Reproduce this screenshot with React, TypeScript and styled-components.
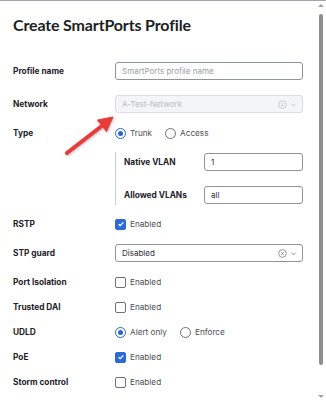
import React from 'react';
import styled, { createGlobalStyle } from 'styled-components';

const GlobalStyle = createGlobalStyle`
  html, body {
    margin: 0;
    padding: 0;
    background: #ffffff;
  }
  * {
    box-sizing: border-box;
  }
`;

const Page = styled.div`
  position: relative;
  width: 326px;
  height: 400px;
  overflow: hidden;
  display: flex;
  flex-direction: row;
  border-top: 1px solid #a3a7ab;
  background: #fff;
  font-family: Inter, 'Noto Sans', sans-serif;
  color: #1d2127;
`;

const Content = styled.div`
  flex: 1;
  padding: 12px 0 0 13px;
  display: flex;
  flex-direction: column;
`;

const Title = styled.h1`
  margin: 0 0 21px;
  font-family: Lato, Inter, sans-serif;
  font-size: 16px;
  line-height: 24px;
  font-weight: 700;
  letter-spacing: -0.15px;
  color: #1b1f24;
`;

const Form = styled.div`
  display: grid;
  grid-template-columns: 102px 188px;
  row-gap: 7px;
  align-items: center;
`;

const Label = styled.div`
  font-size: 8.3px;
  font-weight: 700;
  color: #1d2127;
`;

const Control = styled.div<{ $pad?: boolean }>`
  display: flex;
  align-items: center;
  gap: 5px;
  min-height: 18px;
  padding: ${(p) => (p.$pad ? '4px 0' : '0')};
`;

const TextBox = styled.div<{ $disabled?: boolean; $placeholder?: boolean; $width?: number }>`
  display: flex;
  align-items: center;
  height: 18px;
  width: ${(p) => (p.$width ? `${p.$width}px` : '100%')};
  padding: 0 6px;
  border: 1px solid ${(p) => (p.$disabled ? '#dcdee0' : '#8f949a')};
  border-radius: 3px;
  background: ${(p) => (p.$disabled ? '#f4f5f6' : '#fff')};
  font-size: 8px;
  color: ${(p) => (p.$disabled ? '#b9bcbf' : p.$placeholder ? '#9a9ea4' : '#2a2e33')};
`;

const SelectText = styled.span`
  flex: 1;
`;

const SelectIcons = styled.span<{ $disabled?: boolean }>`
  display: flex;
  align-items: center;
  gap: 3px;
  margin-right: -1px;
  color: ${(p) => (p.$disabled ? '#c4c7ca' : '#8a8e93')};
`;

const Option = styled.label`
  display: flex;
  align-items: center;
  gap: 4px;
  font-size: 8.2px;
  color: #4a4f55;
  margin-right: 8px;
`;

const Radio = styled.span<{ $on?: boolean }>`
  width: 11px;
  height: 11px;
  border-radius: 50%;
  border: 1px solid ${(p) => (p.$on ? '#2a67d4' : '#6d7278')};
  display: flex;
  align-items: center;
  justify-content: center;
  &::after {
    content: '';
    width: 5px;
    height: 5px;
    border-radius: 50%;
    background: ${(p) => (p.$on ? '#2a67d4' : 'transparent')};
  }
`;

const Check = styled.span<{ $on?: boolean }>`
  width: 11px;
  height: 11px;
  border-radius: 2px;
  border: 1px solid ${(p) => (p.$on ? '#2d6ad8' : '#6d7278')};
  background: ${(p) => (p.$on ? '#2d6ad8' : '#fff')};
  display: flex;
  align-items: center;
  justify-content: center;
`;

const SubSection = styled.div`
  grid-column: 2;
  margin: 3px 0;
  padding: 1px 0 1px 8px;
  border-left: 1px solid #c9ccd0;
  display: flex;
  flex-direction: column;
  gap: 15px;
`;

const SubRow = styled.div`
  display: flex;
  align-items: center;
  justify-content: space-between;
`;

const Scrollbar = styled.div`
  width: 10px;
  display: flex;
  flex-direction: column;
  align-items: center;
  padding: 3px 0 2px;
`;

const ScrollArrow = styled.div<{ $down?: boolean }>`
  width: 0;
  height: 0;
  border-left: 3px solid transparent;
  border-right: 3px solid transparent;
  ${(p) => (p.$down ? 'border-top: 3px solid #a2a2a2;' : 'border-bottom: 3px solid #a2a2a2;')}
`;

const ScrollTrack = styled.div`
  flex: 1;
  width: 100%;
  padding: 7px 0 30px;
  display: flex;
  justify-content: center;
`;

const Thumb = styled.div`
  width: 4px;
  height: 100%;
  border-radius: 2px;
  background: #8e8e8e;
`;

const Annotation = styled.svg`
  position: absolute;
  left: 0;
  top: 0;
  pointer-events: none;
`;

function ClearIcon() {
  return (
    <svg width="9" height="9" viewBox="0 0 10 10" fill="none" stroke="currentColor" strokeWidth="1">
      <circle cx="5" cy="5" r="4.3" />
      <path d="M3.4 3.4l3.2 3.2M6.6 3.4l-3.2 3.2" />
    </svg>
  );
}

function Chevron() {
  return (
    <svg width="7" height="7" viewBox="0 0 8 8" fill="none" stroke="currentColor" strokeWidth="1.1">
      <path d="M1.5 3l2.5 2.5L6.5 3" />
    </svg>
  );
}

function Tick() {
  return (
    <svg width="8" height="8" viewBox="0 0 8 8" fill="none" stroke="#fff" strokeWidth="1.3">
      <path d="M1.6 4.2l1.6 1.5 3.2-3.3" />
    </svg>
  );
}

function Select({ value, disabled }: { value: string; disabled?: boolean }) {
  return (
    <TextBox $disabled={disabled}>
      <SelectText>{value}</SelectText>
      <SelectIcons $disabled={disabled}>
        <ClearIcon />
        <Chevron />
      </SelectIcons>
    </TextBox>
  );
}

function CheckOption({ on }: { on?: boolean }) {
  return (
    <Option>
      <Check $on={on}>{on && <Tick />}</Check>
      Enabled
    </Option>
  );
}

function App() {
  return (
    <>
      <GlobalStyle />
      <Page>
        <Content>
          <Title>Create SmartPorts Profile</Title>
          <Form>
            <Label>Profile name</Label>
            <Control $pad>
              <TextBox $placeholder>SmartPorts profile name</TextBox>
            </Control>

            <Label>Network</Label>
            <Control $pad>
              <Select value="A-Test-Network" disabled />
            </Control>

            <Label>Type</Label>
            <Control>
              <Option>
                <Radio $on />
                Trunk
              </Option>
              <Option>
                <Radio />
                Access
              </Option>
            </Control>

            <SubSection>
              <SubRow>
                <Label>Native VLAN</Label>
                <TextBox $width={99}>1</TextBox>
              </SubRow>
              <SubRow>
                <Label>Allowed VLANs</Label>
                <TextBox $width={99}>all</TextBox>
              </SubRow>
            </SubSection>

            <Label>RSTP</Label>
            <Control>
              <CheckOption on />
            </Control>

            <Label>STP guard</Label>
            <Control $pad>
              <Select value="Disabled" />
            </Control>

            <Label>Port Isolation</Label>
            <Control>
              <CheckOption />
            </Control>

            <Label>Trusted DAI</Label>
            <Control>
              <CheckOption />
            </Control>

            <Label>UDLD</Label>
            <Control>
              <Option>
                <Radio $on />
                Alert only
              </Option>
              <Option>
                <Radio />
                Enforce
              </Option>
            </Control>

            <Label>PoE</Label>
            <Control>
              <CheckOption on />
            </Control>

            <Label>Storm control</Label>
            <Control>
              <CheckOption />
            </Control>
          </Form>
        </Content>
        <Scrollbar>
          <ScrollArrow />
          <ScrollTrack>
            <Thumb />
          </ScrollTrack>
          <ScrollArrow $down />
        </Scrollbar>

        <Annotation width="326" height="400" viewBox="0 0 326 400">
          <defs>
            <filter id="arrowShadow" x="-20%" y="-20%" width="140%" height="140%">
              <feDropShadow dx="0.5" dy="1" stdDeviation="0.8" floodColor="#000" floodOpacity="0.3" />
            </filter>
          </defs>
          <g filter="url(#arrowShadow)" fill="#ea3b3b" stroke="#ea3b3b">
            <line x1="67" y1="152" x2="103" y2="124" strokeWidth="4" strokeLinecap="round" />
            <polygon points="113,116 106.5,130.5 97.5,119" strokeWidth="1" strokeLinejoin="round" />
          </g>
        </Annotation>
      </Page>
    </>
  );
}

export default App;
